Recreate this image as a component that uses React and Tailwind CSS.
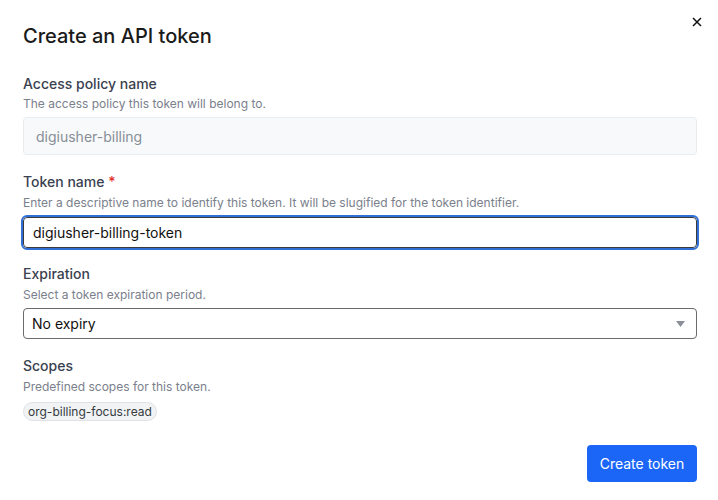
import React from "react";

export default function App() {
  return (
    <div className="relative w-[718px] h-[500px] bg-white pl-[23px] pr-[21px] pt-[22px] text-[#212529] font-['Inter',sans-serif]">
      {/* Close */}
      <button className="absolute top-[16px] right-[15px] w-[12px] h-[12px] flex items-center justify-center text-[#111]">
        <svg width="10" height="10" viewBox="0 0 10 10" fill="none" stroke="currentColor" strokeWidth="1.5">
          <path d="M1 1 L9 9 M9 1 L1 9" />
        </svg>
      </button>

      <h2 className="text-[20px] leading-[28px] font-medium text-[#1a1a1a]">Create an API token</h2>

      {/* Access policy */}
      <div className="mt-[24px]">
        <label className="block text-[14px] leading-[20px] font-medium text-[#3a4150]">Access policy name</label>
        <p className="mt-[2px] text-[12px] leading-[16px] text-[#7a808c]">The access policy this token will belong to.</p>
        <div className="mt-[5px] h-[38px] flex items-center px-[12px] rounded-[4px] border border-[#e9ecef] bg-[#f8f9fa] text-[14px] text-[#868e96]">
          digiusher-billing
        </div>
      </div>

      {/* Token name */}
      <div className="mt-[17px]">
        <label className="block text-[14px] leading-[20px] font-medium text-[#3a4150]">
          Token name <span className="text-[#e03131]">*</span>
        </label>
        <p className="mt-[3px] text-[12px] leading-[16px] text-[#7a808c]">
          Enter a descriptive name to identify this token. It will be slugified for the token identifier.
        </p>
        <div className="mt-[6px] h-[31px] flex items-center px-[9px] rounded-[4px] border border-[#3a3a3a] outline-2 outline-solid outline-[#2f6fd6] bg-white text-[14px] text-[#111]">
          digiusher-billing-token
        </div>
      </div>

      {/* Expiration */}
      <div className="mt-[16px]">
        <label className="block text-[14px] leading-[20px] font-medium text-[#3a4150]">Expiration</label>
        <p className="mt-[3px] text-[12px] leading-[16px] text-[#7a808c]">Select a token expiration period.</p>
        <div className="mt-[5px] h-[31px] flex items-center justify-between pl-[8px] pr-[11px] rounded-[4px] border-[1.5px] border-[#6b6b6b] bg-white text-[14px] text-[#111]">
          <span>No expiry</span>
          <svg width="9" height="6" viewBox="0 0 9 6">
            <path d="M0 0 L9 0 L4.5 6 Z" fill="#8a8f98" />
          </svg>
        </div>
      </div>

      {/* Scopes */}
      <div className="mt-[17px]">
        <label className="block text-[14px] leading-[20px] font-medium text-[#3a4150]">Scopes</label>
        <p className="mt-[3px] text-[12px] leading-[16px] text-[#7a808c]">Predefined scopes for this token.</p>
        <div className="mt-[7px] flex">
          <span className="h-[19px] flex items-center px-[4px] rounded-full border border-[#dee2e6] bg-[#f1f3f5] text-[12px] text-[#343a40]">
            org-billing-focus:read
          </span>
        </div>
      </div>

      <div className="mt-[24px] flex justify-end">
        <button className="h-[37px] w-[110px] rounded-[4px] bg-[#1c66f7] text-white text-[14px]">Create token</button>
      </div>
    </div>
  );
}
